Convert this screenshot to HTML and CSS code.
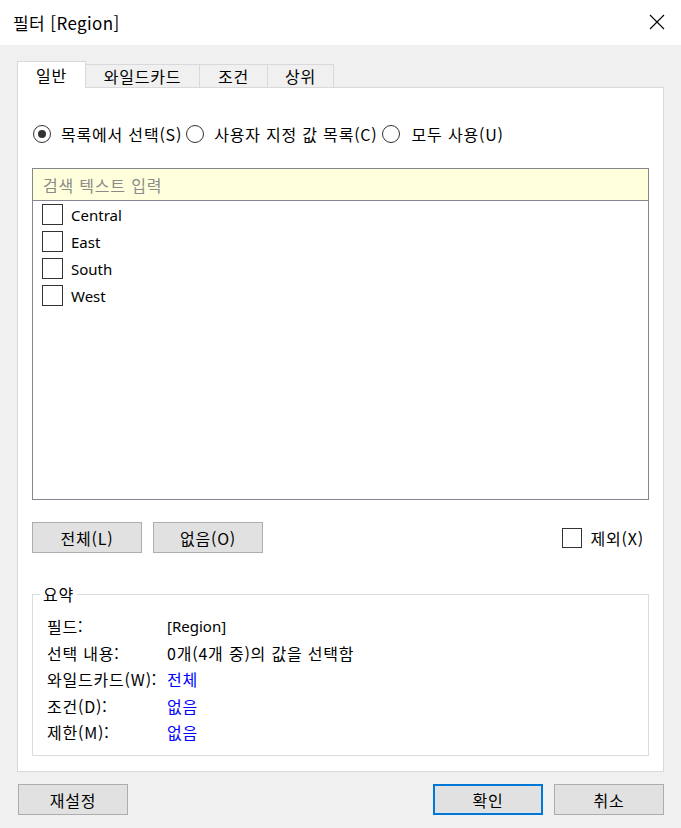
FILE: index.html
```html
<!DOCTYPE html>
<html lang="ko">
<head>
  <meta charset="UTF-8" />
  <title>필터 [Region]</title>
  <link rel="stylesheet" href="styles.css">
</head>
<body>
  <div class="dialog">
    <div class="titlebar">
      <span class="title">필터 [Region]</span>
      <svg class="close" width="16" height="16" viewBox="0 0 16 16">
        <path d="M1 1 L15 15 M15 1 L1 15" stroke="#000" stroke-width="1.1" fill="none" />
      </svg>
    </div>

    <div class="content">
      <div class="tabs">
        <div class="tab active" style="width:69px">일반</div>
        <div class="tab" style="width:114px">와일드카드</div>
        <div class="tab" style="width:68px">조건</div>
        <div class="tab" style="width:66px">상위</div>
      </div>

      <div class="panel">
        <div class="radios">
          <label class="radio"><span class="dot checked"></span>목록에서 선택(S)</label>
          <label class="radio"><span class="dot"></span>사용자 지정 값 목록(C)</label>
          <label class="radio wide"><span class="dot"></span>모두 사용(U)</label>
        </div>

        <div class="listbox">
          <div class="search">검색 텍스트 입력</div>
          <div class="items">
            <div class="item"><span class="check"></span><span class="latin">Central</span></div>
            <div class="item"><span class="check"></span><span class="latin">East</span></div>
            <div class="item"><span class="check"></span><span class="latin">South</span></div>
            <div class="item"><span class="check"></span><span class="latin">West</span></div>
          </div>
        </div>

        <div class="list-actions">
          <button class="btn">전체(L)</button>
          <button class="btn">없음(O)</button>
          <label class="exclude"><span class="check"></span>제외(X)</label>
        </div>

        <fieldset class="summary">
          <legend>요약</legend>
          <div class="summary-grid">
            <span>필드:</span><span class="latin">[Region]</span>
            <span>선택 내용:</span><span>0개(4개 중)의 값을 선택함</span>
            <span>와일드카드(W):</span><span class="link">전체</span>
            <span>조건(D):</span><span class="link">없음</span>
            <span>제한(M):</span><span class="link">없음</span>
          </div>
        </fieldset>
      </div>

      <div class="footer">
        <button class="btn">재설정</button>
        <div class="footer-right">
          <button class="btn primary">확인</button>
          <button class="btn">취소</button>
        </div>
      </div>
    </div>
  </div>
</body>
</html>
```

FILE: styles.css
```css
body {
  margin: 0;
  font-family: "Noto Sans CJK KR", "Noto Sans", sans-serif;
  font-size: 16px;
  letter-spacing: 0.8px;
  color: #000;
  background-color: #f0f0f0;
}
.dialog {
  width: 681px;
  height: 828px;
  background-color: #f0f0f0;
}
.titlebar {
  height: 45px;
  background-color: #fff;
  display: flex;
  align-items: center;
  justify-content: space-between;
  padding: 0 16px 0 13px;
}
.title {
  font-size: 17px;
  line-height: 20px;
  letter-spacing: 0.4px;
}
.close {
  margin-top: -1px;
}
.latin {
  font-family: "Noto Sans", sans-serif;
  font-size: 15px;
  letter-spacing: 0;
}

.content {
  padding: 16px 17px 0 17px;
}

/* Tabs */
.tabs {
  display: flex;
  align-items: flex-end;
  height: 26px;
}
.tab {
  height: 23px;
  box-sizing: border-box;
  border: 1px solid #d9d9d9;
  border-bottom: none;
  border-left: none;
  background-color: #f0f0f0;
  display: flex;
  align-items: center;
  justify-content: center;
  line-height: 20px;
}
.tab.active {
  height: 27px;
  margin-bottom: -1px;
  border-left: 1px solid #d9d9d9;
  background-color: #fff;
  position: relative;
  z-index: 1;
}

.panel {
  height: 685px;
  box-sizing: border-box;
  background-color: #fff;
  border: 1px solid #d9d9d9;
  padding: 36px 14px 0 14px;
}

/* Radios */
.radios {
  display: flex;
  align-items: center;
  height: 20px;
  padding-left: 1px;
  line-height: 20px;
}
.radio {
  display: flex;
  align-items: center;
  gap: 10px;
  margin-right: 4px;
}
.radio.wide {
  gap: 12px;
}
.dot {
  width: 18px;
  height: 18px;
  border: 1px solid #333;
  border-radius: 50%;
  box-sizing: border-box;
  display: flex;
  align-items: center;
  justify-content: center;
}
.dot.checked::after {
  content: "";
  width: 8px;
  height: 8px;
  border-radius: 50%;
  background-color: #333;
}

/* List box */
.listbox {
  margin-top: 24px;
  border: 1px solid #828790;
}
.search {
  height: 31px;
  background-color: #ffffdc;
  border-bottom: 1px solid #828790;
  color: #8a8a8a;
  padding-left: 10px;
  display: flex;
  align-items: center;
  line-height: 20px;
}
.items {
  height: 298px;
  padding-left: 9px;
}
.item {
  height: 27px;
  display: flex;
  align-items: center;
  gap: 8px;
  line-height: 20px;
}
.check {
  width: 21px;
  height: 21px;
  box-sizing: border-box;
  border: 1px solid #333;
  background-color: #fff;
}

/* Buttons */
.list-actions {
  margin-top: 22px;
  display: flex;
  align-items: center;
  gap: 11px;
}
.btn {
  width: 110px;
  height: 31px;
  background-color: #e1e1e1;
  border: 1px solid #adadad;
  font-family: inherit;
  font-size: 16px;
  letter-spacing: 0.8px;
  color: #000;
  padding: 0;
}
.btn.primary {
  border: 2px solid #0078d7;
}
.exclude {
  margin-left: auto;
  margin-right: 5px;
  display: flex;
  align-items: center;
  gap: 9px;
  line-height: 20px;
}
.exclude .check {
  width: 20px;
  height: 20px;
}

/* Summary */
.summary {
  margin: 31px 0 0 0;
  padding: 9px 14px 9px 14px;
  border: 1px solid #dcdcdc;
  height: 172px;
  box-sizing: border-box;
}
.summary legend {
  padding: 0 3px;
  margin-left: -7px;
  line-height: 20px;
}
.summary-grid {
  display: grid;
  grid-template-columns: 120px 1fr;
  grid-auto-rows: 26.5px;
  align-items: center;
  line-height: 20px;
}
.link {
  color: #0000ff;
}

.footer {
  display: flex;
  justify-content: space-between;
  padding: 12px 0 0 1px;
}
.footer-right {
  display: flex;
  gap: 11px;
}
```
